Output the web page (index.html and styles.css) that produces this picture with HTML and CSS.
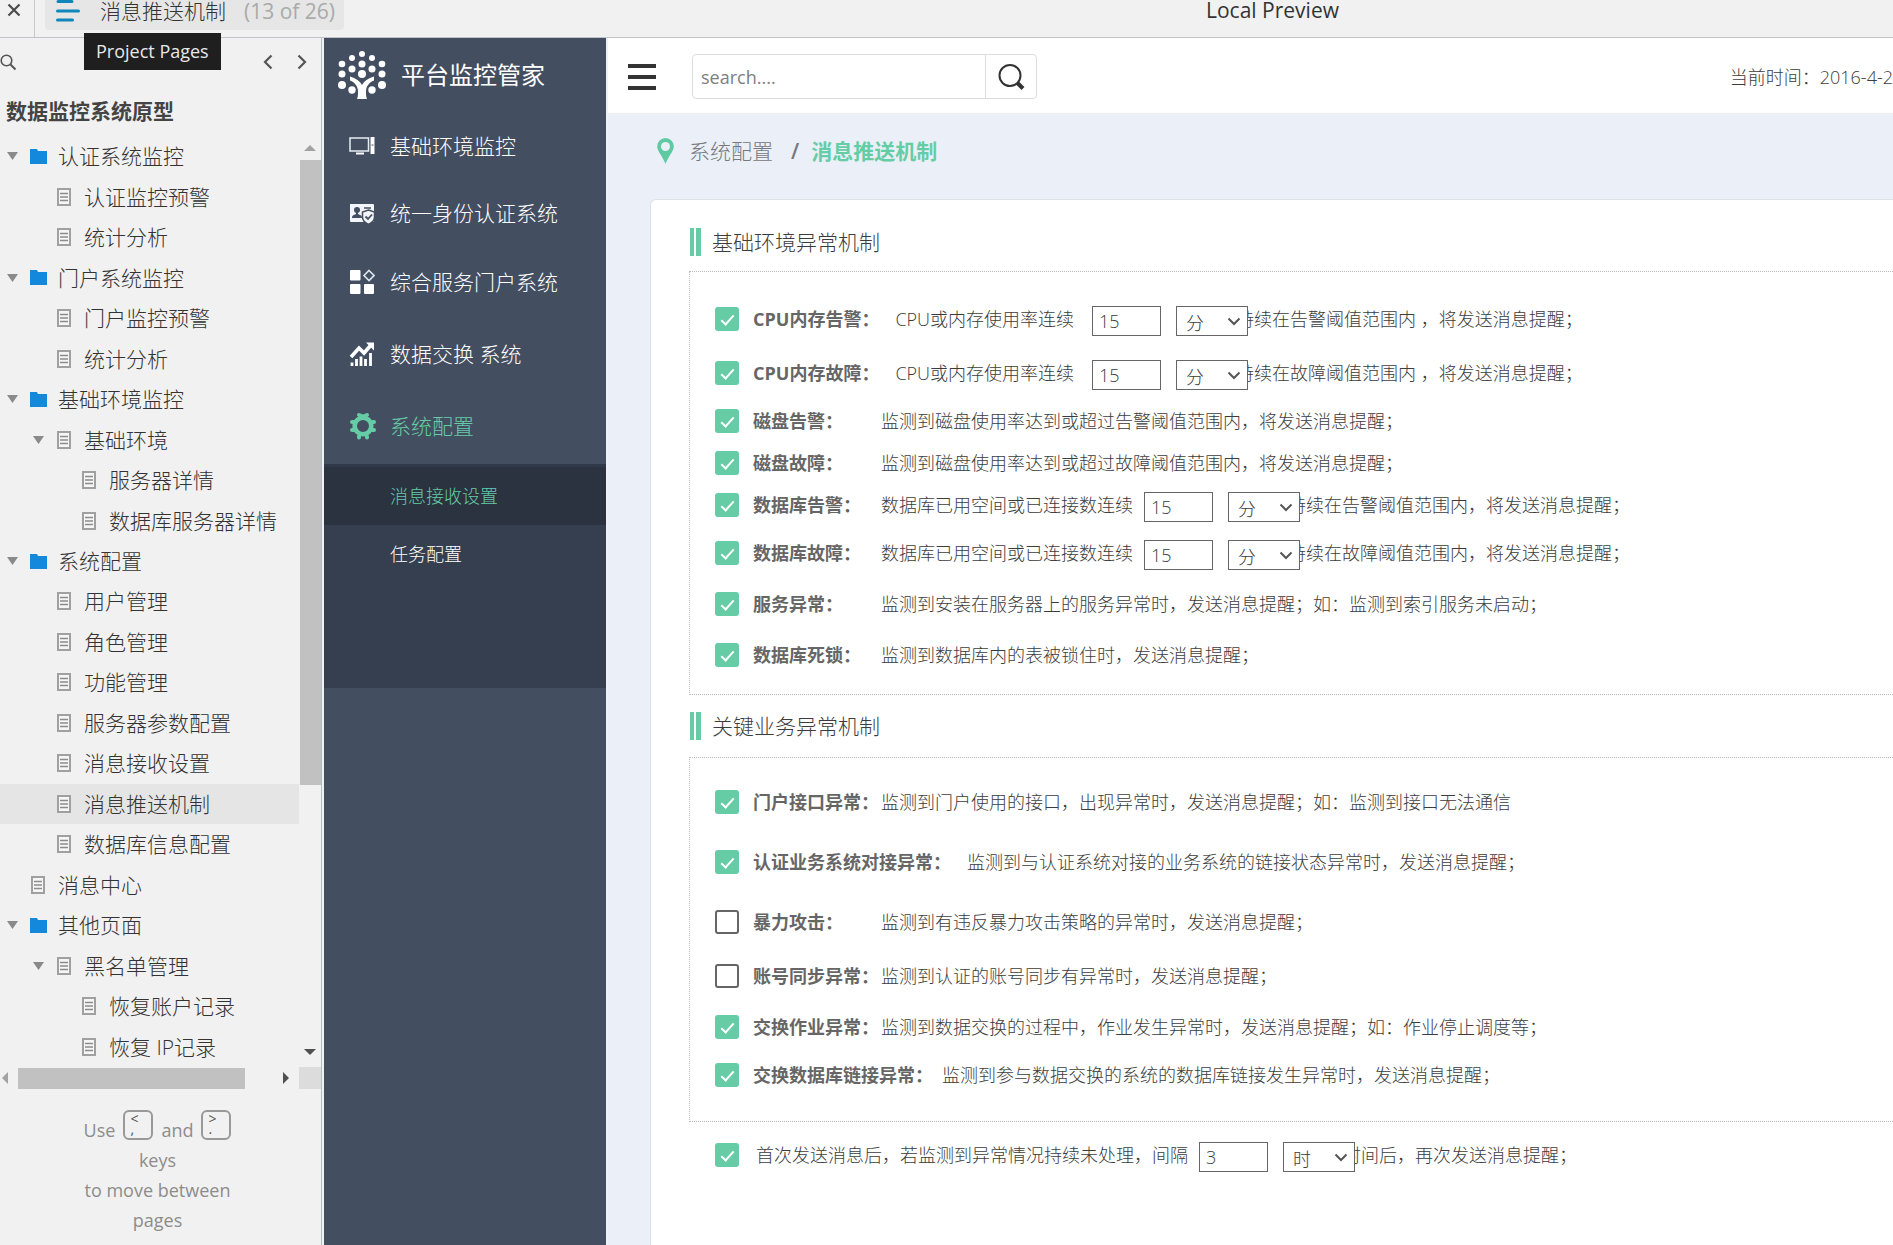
FILE: index.html
```html
<!DOCTYPE html>
<html lang="zh-CN">
<head>
<meta charset="utf-8">
<title>消息推送机制</title>
<link rel="stylesheet" href="styles.css">
</head>
<body>
<svg class="defs" aria-hidden="true">
  <symbol id="doc" viewBox="0 0 14 18"><path d="M1 1h12v16H1z" fill="#f6f6f6" stroke="#a0a0a0" stroke-width="2"/><path d="M3 5.500h8M3 9h8M3 12.500h8" stroke="#8c8c8c" stroke-width="1.300"/></symbol>
  <symbol id="folder" viewBox="0 0 17 15"><path d="M0 0h7l1 2h9v13H0z" fill="#1489db"/></symbol>
  <symbol id="caret" viewBox="0 0 11 8"><path d="M0 0h11L5.500 8z" fill="#8a8a8a"/></symbol>
  <symbol id="chev" viewBox="0 0 14 9"><path d="M1.500 1.500 7 7l5.500-5.500" fill="none" stroke="#555" stroke-width="2"/></symbol>
</svg>

<header class="topbar">
  <button class="close" aria-label="关闭"><svg width="14" height="14" viewBox="0 0 14 14"><path d="M1.500 1.500l11 11M12.500 1.500l-11 11" stroke="#4c4c4c" stroke-width="2.200"/></svg></button>
  <div class="page-slot">
    <button class="page-button">
      <svg width="24" height="22" viewBox="0 0 24 22"><path d="M2 1.500h14M1.500 11h21M1.500 20h15" stroke="#0e86bb" stroke-width="3" stroke-linecap="round"/></svg>
      <span class="page-name">消息推送机制</span>
      <span class="page-count">(13 of 26)</span>
    </button>
    <span class="tooltip" role="tooltip">Project Pages</span>
  </div>
  <span class="preview">Local Preview</span>
</header>

<div class="shell">
  <aside class="sidebar">
    <div class="tools">
      <button aria-label="搜索"><svg width="17" height="17" viewBox="0 0 17 17"><circle cx="6.500" cy="6.500" r="5.300" fill="none" stroke="#555" stroke-width="1.600"/><path d="M10.500 10.500l5 5" stroke="#555" stroke-width="2"/></svg></button>
      <span class="arrows">
        <button aria-label="上一页"><svg width="10" height="16" viewBox="0 0 10 16"><path d="M8.500 1.500 2 8l6.500 6.500" fill="none" stroke="#555" stroke-width="2.200"/></svg></button>
        <button aria-label="下一页"><svg width="10" height="16" viewBox="0 0 10 16"><path d="M1.500 1.500 8 8l-6.500 6.500" fill="none" stroke="#555" stroke-width="2.200"/></svg></button>
      </span>
    </div>
    <h1 class="project">数据监控系统原型</h1>
    <div class="tree-pane">
      <ul class="tree">
        <li><svg class="tri"><use href="#caret"/></svg><svg class="fold"><use href="#folder"/></svg><a href="#">认证系统监控</a></li>
        <li class="l1"><svg class="doc"><use href="#doc"/></svg><a href="#">认证监控预警</a></li>
        <li class="l1"><svg class="doc"><use href="#doc"/></svg><a href="#">统计分析</a></li>
        <li><svg class="tri"><use href="#caret"/></svg><svg class="fold"><use href="#folder"/></svg><a href="#">门户系统监控</a></li>
        <li class="l1"><svg class="doc"><use href="#doc"/></svg><a href="#">门户监控预警</a></li>
        <li class="l1"><svg class="doc"><use href="#doc"/></svg><a href="#">统计分析</a></li>
        <li><svg class="tri"><use href="#caret"/></svg><svg class="fold"><use href="#folder"/></svg><a href="#">基础环境监控</a></li>
        <li class="l1"><svg class="tri"><use href="#caret"/></svg><svg class="doc"><use href="#doc"/></svg><a href="#">基础环境</a></li>
        <li class="l2"><svg class="doc"><use href="#doc"/></svg><a href="#">服务器详情</a></li>
        <li class="l2"><svg class="doc"><use href="#doc"/></svg><a href="#">数据库服务器详情</a></li>
        <li><svg class="tri"><use href="#caret"/></svg><svg class="fold"><use href="#folder"/></svg><a href="#">系统配置</a></li>
        <li class="l1"><svg class="doc"><use href="#doc"/></svg><a href="#">用户管理</a></li>
        <li class="l1"><svg class="doc"><use href="#doc"/></svg><a href="#">角色管理</a></li>
        <li class="l1"><svg class="doc"><use href="#doc"/></svg><a href="#">功能管理</a></li>
        <li class="l1"><svg class="doc"><use href="#doc"/></svg><a href="#">服务器参数配置</a></li>
        <li class="l1"><svg class="doc"><use href="#doc"/></svg><a href="#">消息接收设置</a></li>
        <li class="l1 current"><svg class="doc"><use href="#doc"/></svg><a href="#">消息推送机制</a></li>
        <li class="l1"><svg class="doc"><use href="#doc"/></svg><a href="#">数据库信息配置</a></li>
        <li><svg class="doc"><use href="#doc"/></svg><a href="#">消息中心</a></li>
        <li><svg class="tri"><use href="#caret"/></svg><svg class="fold"><use href="#folder"/></svg><a href="#">其他页面</a></li>
        <li class="l1"><svg class="tri"><use href="#caret"/></svg><svg class="doc"><use href="#doc"/></svg><a href="#">黑名单管理</a></li>
        <li class="l2"><svg class="doc"><use href="#doc"/></svg><a href="#">恢复账户记录</a></li>
        <li class="l2"><svg class="doc"><use href="#doc"/></svg><a href="#">恢复 IP记录</a></li>
      </ul>
      <div class="vbar">
        <svg width="12" height="6" viewBox="0 0 12 6"><path d="M0 6h12L6 0z" fill="#a3a3a3"/></svg>
        <span class="thumb"></span>
        <span class="track"></span>
        <svg width="12" height="6" viewBox="0 0 12 6"><path d="M0 0h12L6 6z" fill="#505050"/></svg>
      </div>
      <div class="hbar">
        <svg width="6" height="12" viewBox="0 0 6 12"><path d="M6 0v12L0 6z" fill="#a3a3a3"/></svg>
        <span class="thumb"></span>
        <span class="track"></span>
        <svg width="6" height="12" viewBox="0 0 6 12"><path d="M0 0v12L6 6z" fill="#505050"/></svg>
      </div>
      <div class="corner"></div>
    </div>
    <footer class="hint">
      <p class="keys">Use <kbd><span>&lt;</span><span>,</span></kbd> and <kbd><span>&gt;</span><span>.</span></kbd></p>
      <p>keys</p>
      <p>to move between</p>
      <p>pages</p>
    </footer>
  </aside>

  <nav class="menu">
    <div class="brand">
      <svg width="48" height="48" viewBox="0 0 48 48" fill="#fff">
        <circle cx="24" cy="3" r="3"/><circle cx="14" cy="7" r="3"/><circle cx="34" cy="7" r="3"/>
        <circle cx="4" cy="13" r="3.300"/><circle cx="24" cy="13" r="3.500"/><circle cx="44" cy="13" r="3.300"/>
        <circle cx="14" cy="18" r="3.500"/><circle cx="34" cy="18" r="3.500"/>
        <circle cx="4" cy="23" r="3.500"/><circle cx="24" cy="23" r="4"/><circle cx="44" cy="23" r="3.500"/>
        <circle cx="4" cy="34" r="4"/><circle cx="44" cy="34" r="4"/><circle cx="14" cy="39" r="3.700"/><circle cx="34" cy="39" r="3.700"/>
        <path d="M12 25.500c6 2 10 4.500 12 8.500 2-4 6-6.500 12-8.500v4c-5 2-8 6-8 11 0 3 0 5 1 7.500H19c1-2.500 1-4.500 1-7.500 0-5-3-9-8-11z"/>
      </svg>
      <span>平台监控管家</span>
    </div>
    <a class="item compact" href="#"><svg width="26" height="26" viewBox="0 0 26 26"><path d="M1 5h18.500v13H1z" fill="none" stroke="#e8edf4" stroke-width="1.500"/><path d="M7 20.500h8" stroke="#fff" stroke-width="2"/><path d="M21.500 4h4v17h-4z" fill="#fff"/><path d="M22.500 12h2" stroke="#434e61"/></svg>基础环境监控</a>
    <a class="item compact" href="#"><svg width="26" height="26" viewBox="0 0 26 26"><path d="M1 4h23a1 1 0 0 1 1 1v16a1 1 0 0 1-1 1H2a1 1 0 0 1-1-1z" fill="#f2f5f9"/><circle cx="8" cy="10" r="3" fill="#434e61"/><path d="M3 18c0-3 2-3 4-4V12h2v2c2 1 4 1 4 4z" fill="#434e61"/><path d="M15 8h7" stroke="#434e61" stroke-width="1.500"/><path d="M19.500 10l6 2v5c0 4-3 6-6 7.500-3-1.500-6-3.500-6-7.500v-5z" fill="#f2f5f9" stroke="#434e61" stroke-width="1.500"/><path d="M16.500 16.500l2.500 2.500 4-4.500" fill="none" stroke="#434e61" stroke-width="1.800"/></svg>统一身份认证系统</a>
    <a class="item" href="#"><svg width="26" height="26" viewBox="0 0 26 26" fill="#fff"><rect x="1" y="1" width="10.500" height="10.500" rx="1"/><rect x="1" y="15" width="10.500" height="10" rx="1"/><rect x="15" y="15" width="10" height="10" rx="1"/><path d="M20 1.500l5 5-5 5-5-5z" fill="none" stroke="#dfe5ee" stroke-width="1.600"/></svg>综合服务门户系统</a>
    <a class="item" href="#"><svg width="26" height="26" viewBox="0 0 26 26"><path d="M2 16l8-9 5 5 7-8" fill="none" stroke="#fff" stroke-width="3.600"/><path d="M17 1.500h8v8z" fill="#fff"/><path d="M3 21.500V25M7.500 18v7M12 15.500V25M16.500 18v7M21.500 12v13" stroke="#fff" stroke-width="2.800"/></svg>数据交换 系统</a>
    <a class="item on" href="#"><svg width="28" height="28" viewBox="0 0 28 28"><circle cx="14" cy="14" r="8.300" fill="none" stroke="#66cca6" stroke-width="4.600"/><g stroke="#66cca6" stroke-linecap="round"><path d="M14 4.500 10 3M14 4.500 18 3M4.500 10 3 10M4.500 18 3 18M10 24.500 10 25.500M18 24.500 18 25.500M23.500 10 25 10M23.500 18 25 18" stroke-width="4"/></g></svg>系统配置</a>
    <div class="submenu">
      <a class="on" href="#">消息接收设置</a>
      <a href="#">任务配置</a>
    </div>
  </nav>

  <main class="main">
    <div class="head">
      <button class="burger" aria-label="菜单"><span></span><span></span><span></span></button>
      <form class="search">
        <input type="text" placeholder="search...." aria-label="search">
        <button type="button" aria-label="搜索"><svg width="28" height="28" viewBox="0 0 28 28"><circle cx="13" cy="12.500" r="10.500" fill="none" stroke="#333" stroke-width="2"/><path d="M20.500 20l5.500 5.500" stroke="#333" stroke-width="4"/></svg></button>
      </form>
      <span class="time">当前时间：2016-4-2</span>
    </div>
    <div class="crumb">
      <svg width="17" height="26" viewBox="0 0 17 26"><path d="M8.500 0a8.300 8.300 0 0 1 8.300 8.500C16.800 13 11 19 8.500 26 6 19 .2 13 .2 8.500A8.300 8.300 0 0 1 8.500 0z" fill="#5fcaa2"/><circle cx="8.500" cy="8.500" r="4.500" fill="#ebf0f8"/></svg>
      <a href="#">系统配置</a><span class="slash">/</span><strong>消息推送机制</strong>
    </div>
    <div class="card">
      <h2>基础环境异常机制</h2>
      <section class="box first">
        <div class="row tall"><input type="checkbox" id="c1" checked><label class="long" for="c1">CPU内存告警：</label><span>CPU或内存使用率连续</span><span class="set spaced"><input type="text" value="15" aria-label="时长"><span class="pick"><select aria-label="单位"><option>分</option></select><svg><use href="#chev"/></svg></span></span><span class="tail">持续在告警阈值范围内 ，将发送消息提醒；</span></div>
        <div class="row tall"><input type="checkbox" id="c2" checked><label class="long" for="c2">CPU内存故障：</label><span>CPU或内存使用率连续</span><span class="set spaced"><input type="text" value="15" aria-label="时长"><span class="pick"><select aria-label="单位"><option>分</option></select><svg><use href="#chev"/></svg></span></span><span class="tail">持续在故障阈值范围内 ，将发送消息提醒；</span></div>
        <div class="row short"><input type="checkbox" id="c3" checked><label for="c3">磁盘告警：</label><span>监测到磁盘使用率达到或超过告警阈值范围内，将发送消息提醒；</span></div>
        <div class="row short"><input type="checkbox" id="c4" checked><label for="c4">磁盘故障：</label><span>监测到磁盘使用率达到或超过故障阈值范围内，将发送消息提醒；</span></div>
        <div class="row short"><input type="checkbox" id="c5" checked><label for="c5">数据库告警：</label><span>数据库已用空间或已连接数连续</span><span class="set"><input type="text" value="15" aria-label="时长"><span class="pick"><select aria-label="单位"><option>分</option></select><svg><use href="#chev"/></svg></span></span><span class="tail">持续在告警阈值范围内，将发送消息提醒；</span></div>
        <div class="row tall"><input type="checkbox" id="c6" checked><label for="c6">数据库故障：</label><span>数据库已用空间或已连接数连续</span><span class="set"><input type="text" value="15" aria-label="时长"><span class="pick"><select aria-label="单位"><option>分</option></select><svg><use href="#chev"/></svg></span></span><span class="tail">持续在故障阈值范围内，将发送消息提醒；</span></div>
        <div class="row"><input type="checkbox" id="c7" checked><label for="c7">服务异常：</label><span>监测到安装在服务器上的服务异常时，发送消息提醒；如：监测到索引服务未启动；</span></div>
        <div class="row tall"><input type="checkbox" id="c8" checked><label for="c8">数据库死锁：</label><span>监测到数据库内的表被锁住时，发送消息提醒；</span></div>
      </section>
      <h2>关键业务异常机制</h2>
      <section class="box second">
        <div class="row high"><input type="checkbox" id="c9" checked><label for="c9">门户接口异常：</label><span>监测到门户使用的接口，出现异常时，发送消息提醒；如：监测到接口无法通信</span></div>
        <div class="row high"><input type="checkbox" id="c10" checked><label class="long" for="c10">认证业务系统对接异常：</label><span>监测到与认证系统对接的业务系统的链接状态异常时，发送消息提醒；</span></div>
        <div class="row high"><input type="checkbox" id="c11"><label for="c11">暴力攻击：</label><span>监测到有违反暴力攻击策略的异常时，发送消息提醒；</span></div>
        <div class="row"><input type="checkbox" id="c12"><label for="c12">账号同步异常：</label><span>监测到认证的账号同步有异常时，发送消息提醒；</span></div>
        <div class="row tall"><input type="checkbox" id="c13" checked><label for="c13">交换作业异常：</label><span>监测到数据交换的过程中，作业发生异常时，发送消息提醒；如：作业停止调度等；</span></div>
        <div class="row short"><input type="checkbox" id="c14" checked><label class="near" for="c14">交换数据库链接异常：</label><span>监测到参与数据交换的系统的数据库链接发生异常时，发送消息提醒；</span></div>
      </section>
      <div class="row tall again"><input type="checkbox" id="c15" checked><label class="plain" for="c15">首次发送消息后，若监测到异常情况持续未处理，间隔</label><span class="set"><input type="text" value="3" aria-label="间隔"><span class="pick"><select aria-label="单位"><option>时</option></select><svg><use href="#chev"/></svg></span></span><span class="tail">时间后，再次发送消息提醒；</span></div>
    </div>
  </main>
</div>
</body>
</html>
```

FILE: styles.css
```css
*, *::before { box-sizing: border-box; }
html, body { margin: 0; }
body {
  display: flex;
  flex-direction: column;
  min-height: 100vh;
  overflow-x: hidden;
  background: #f1f1f1;
  color: #3c3c3c;
  font: 300 18px/24px "Open Sans", "Noto Sans CJK SC", sans-serif;
}
button, input, select { font: inherit; color: inherit; margin: 0; }
button { padding: 0; border: 0; background: none; display: flex; align-items: center; }
a { color: inherit; text-decoration: none; }
svg { flex: none; display: block; }
h1, h2, p, ul { margin: 0; padding: 0; }
.defs { position: absolute; width: 0; height: 0; }

/* preview toolbar */
.topbar { display: grid; grid-template-columns: 34px 1fr 136px 551px; height: 38px; border-bottom: 1px solid #c0c4ca; }
.close { height: 20px; padding-left: 7px; }
.page-slot { position: relative; border-left: 1px solid #c8c8c8; padding-left: 10px; }
.page-button { height: 30px; padding: 0 9px 8px 11px; background: #e6e6e6; border-radius: 0 0 4px 4px; }
.page-name { margin-left: 20px; font-size: 21px; color: #333; }
.page-count { margin-left: 18px; font-size: 21px; font-weight: 400; color: #aaa; }
.tooltip { position: absolute; z-index: 2; left: 49px; top: 33px; height: 37px; padding: 0 12px; background: #1f1f1f; color: #e8e8e8; line-height: 37px; white-space: nowrap; font-size: 18px; font-weight: 400; }
.preview { font-size: 21px; font-weight: 400; color: #333; line-height: 20px; white-space: nowrap; }

.shell { flex: 1; display: grid; grid-template-columns: 324px 282px minmax(0, 1fr); }

/* page tree */
.sidebar { display: flex; flex-direction: column; margin-right: 2px; border-right: 1px solid #b4bcc9; }
.tools { display: flex; justify-content: space-between; height: 48px; padding-right: 14px; }
.arrows { display: flex; gap: 24px; }
.project { height: 50px; padding-left: 6px; font-size: 21px; line-height: 50px; font-weight: 700; color: #444; }
.tree-pane { flex: 1; display: grid; grid-template: minmax(0, 1fr) 22px / 1fr 22px; }
.tree { display: grid; grid-auto-rows: 1fr; list-style: none; font-size: 21px; color: #333; white-space: nowrap; }
.tree li { display: grid; grid-template-columns: 23px 28px auto; justify-content: start; align-items: center; padding-left: 7px; }
.tree .l1 { padding-left: 33px; }
.tree .l2 { padding-left: 58px; }
.tree .current { background: #e5e5e5; }
.tree a { grid-column: 3; }
.tri { width: 11px; height: 8px; grid-column: 1; }
.doc, .fold { grid-column: 2; margin-left: 1px; width: 14px; height: 18px; }
.fold { width: 17px; height: 15px; margin-left: 0; }
.vbar { display: flex; flex-direction: column; align-items: center; padding: 9px 0 12px; }
.vbar .thumb { flex: 623; margin-top: 9px; width: 21px; background: #c1c1c1; }
.vbar .track { flex: 263; }
.hbar { display: flex; align-items: center; padding: 0 10px 0 2px; }
.hbar .thumb { flex: 227; margin-left: 10px; height: 21px; background: #c1c1c1; }
.hbar .track { flex: 38; }
.corner { background: #dcdcdc; }
.hint { padding: 21px 6px 10px 0; text-align: center; color: #8c8c8c; font-weight: 400; font-size: 18px; line-height: 30px; }
.keys { display: flex; justify-content: center; align-items: end; gap: 8px; height: 35px; }
kbd { display: flex; flex-direction: column; width: 30px; height: 30px; margin-bottom: 5px; padding: 2px 5px; border: 2px solid #999; border-radius: 6px; font: 400 14px/10px "Open Sans", sans-serif; color: #555; text-align: left; }

/* dark menu */
.menu { background: #434e61; color: #fff; font-size: 21px; }
.brand { display: flex; align-items: center; gap: 15px; height: 74px; padding-left: 14px; font-size: 24px; font-weight: 400; }
.item { display: grid; grid-template-columns: 41px 1fr; align-items: center; height: 72px; padding-left: 25px; }
.compact { height: 67px; }
.on { color: #66cca6; }
.submenu { height: 224px; margin-top: 2px; background: #363f4f; font-size: 18px; border-top: 3px solid #303949; }
.submenu a { display: block; height: 58px; padding-left: 66px; line-height: 58px; }
.submenu .on { background: #2b3240; }

/* content */
.main { margin-left: 2px; background: #ebf0f8; overflow: hidden; display: flex; flex-direction: column; }
.head { display: flex; align-items: center; height: 75px; padding: 2px 0 0 20px; background: #fff; }
.burger { flex-direction: column; gap: 7px; width: 28px; }
.burger span { width: 28px; height: 4px; background: #333; }
.search { display: flex; width: 345px; height: 45px; margin-left: 36px; border: 1px solid #ddd; border-radius: 4px; }
.search input { flex: 1; min-width: 0; padding: 0 8px; border: 0; border-right: 1px solid #ddd; background: none; outline: 0; }
.search input::placeholder { color: #808080; opacity: 1; font-weight: 400; }
.search button { width: 50px; justify-content: center; }
.time { margin-left: auto; white-space: nowrap; }
.crumb { display: flex; align-items: center; height: 86px; padding: 0 0 10px 49px; font-size: 21px; color: #77777c; }
.crumb a { margin-left: 15px; }
.crumb strong { color: #66cca6; font-weight: 700; }
.slash { margin: 0 12px 0 18px; font-weight: 600; }
.card { flex: 1; margin-left: 42px; padding: 12px 0 0 38px; background: #fff; border: 1px solid #dde1e6; border-width: 1px 0 0 1px; border-radius: 6px 0 0 0; white-space: nowrap; }
h2 { display: flex; align-items: center; height: 59px; gap: 11px; font-size: 21px; font-weight: 300; }
h2::before { content: ""; width: 11px; height: 28px; margin-left: 1px; border: solid #66cca6; border-width: 0 5px 0 4px; }
.box { border: 1px dotted #bbb; border-right: 0; padding: 20px 0 12px; }
.box + h2 { height: 62px; }
.second { padding: 14px 0 25px; }
.row { display: flex; align-items: center; height: 48px; padding-left: 25px; }
.short { height: 42px; }
.tall { height: 54px; }
.high { height: 60px; }
.again { margin-top: 6px; padding-left: 26px; }
.row label { min-width: 128px; font-weight: 700; color: #666; }
.row .long { padding-right: 16px; }
.row .near { padding-right: 9px; }
.row .plain { min-width: 0; padding-left: 3px; font-weight: 300; color: inherit; }
.row input[type=checkbox] { appearance: none; flex: none; width: 24px; height: 24px; margin-right: 14px; border: 2px solid #666; border-radius: 3px; display: grid; place-items: center; }
.row input[type=checkbox]:checked { border: 0; background: #66cca6; }
.row input[type=checkbox]:checked::before { content: ""; width: 7px; height: 13px; margin-bottom: 2px; border: solid #fff; border-width: 0 2px 2px 0; transform: rotate(42deg); }
.set { position: relative; display: flex; gap: 15px; margin: 4px 0 0 11px; }
.spaced { margin-left: 18px; }
.set input { width: 69px; height: 30px; padding: 0 6px; border: 1px solid #666; background: #fff; }
.pick { position: relative; }
.pick select { appearance: none; display: block; width: 72px; height: 30px; padding: 3px 9px 0; border: 1px solid #666; border-radius: 0; background: #fff; }
.pick svg { position: absolute; right: 7px; top: 11px; width: 14px; height: 9px; pointer-events: none; }
.tail { margin-left: -12px; }
```
